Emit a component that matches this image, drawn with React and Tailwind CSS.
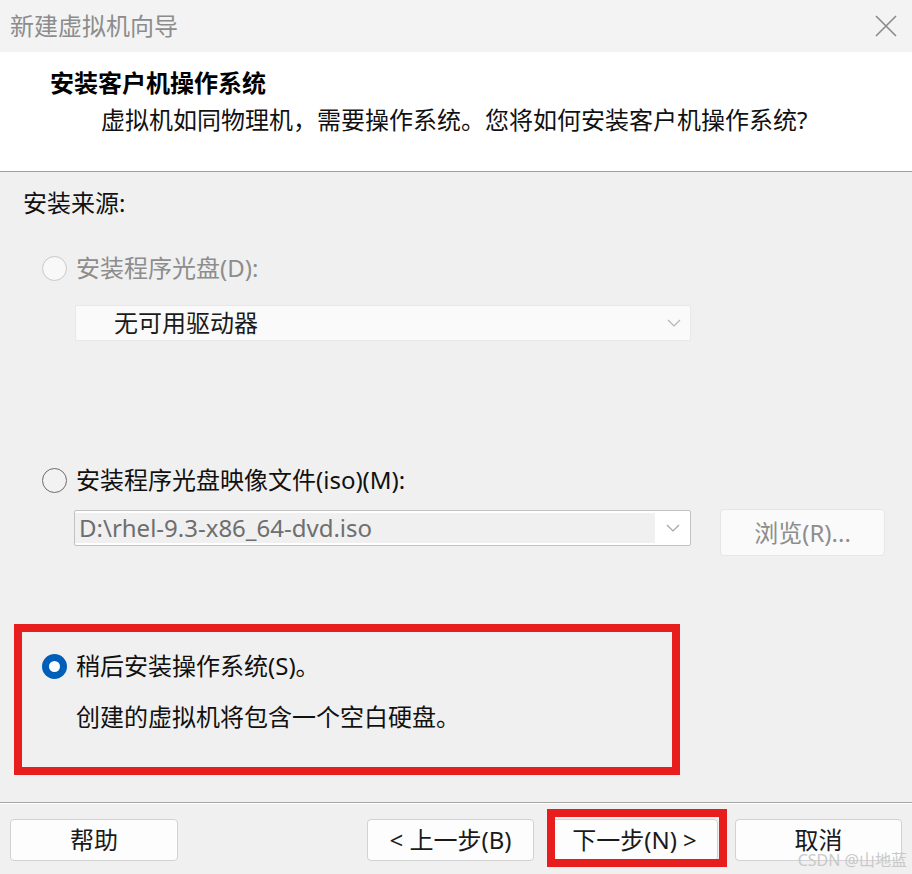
import React from "react";

const FONT = { fontFamily: '"Noto Sans", "Noto Sans CJK SC", sans-serif' };

function Chevron({ color = "#a8a8a8" }) {
  return (
    <svg width="14" height="8" viewBox="0 0 14 8" fill="none">
      <polyline points="1,1 7,7 13,1" stroke={color} strokeWidth="1.2" />
    </svg>
  );
}

function Radio({ kind }) {
  if (kind === "selected") {
    return (
      <div className="w-[25px] h-[25px] rounded-full bg-[#005fb8] flex items-center justify-center shrink-0">
        <div className="w-[11px] h-[11px] rounded-full bg-white" />
      </div>
    );
  }
  if (kind === "disabled") {
    return <div className="w-[25px] h-[25px] rounded-full border-[1.5px] border-[#c8c8c8] bg-[#f8f8f8] shrink-0" />;
  }
  return <div className="w-[25px] h-[25px] rounded-full border-[1.5px] border-[#6c6c6c] bg-[#f2f2f2] shrink-0" />;
}

function Button({ children, w = "w-[167px]" }) {
  return (
    <div className={`${w} h-[42px] rounded-[4px] border border-[#d2d2d2] bg-[#fdfdfd] flex items-center justify-center text-[24px] leading-[24px] text-[#1a1a1a]`}>
      {children}
    </div>
  );
}

export default function App() {
  return (
    <div className="w-[912px] h-[874px] bg-[#f0f0f0] flex flex-col relative overflow-hidden" style={FONT}>
      {/* Title bar */}
      <div className="h-[52px] bg-[#f3f3f3] flex items-center justify-between pl-[10px] pr-[15px] shrink-0">
        <span className="text-[24px] leading-[30px] text-[#8c8c8c]">新建虚拟机向导</span>
        <svg width="22" height="22" viewBox="0 0 22 22" fill="none">
          <path d="M1 1 L21 21 M21 1 L1 21" stroke="#8a8a8a" strokeWidth="1.6" />
        </svg>
      </div>

      {/* Header */}
      <div className="h-[120px] bg-white border-b border-[#a0a0a0] pl-[50px] pt-[16px] shrink-0 flex flex-col">
        <div className="text-[24px] leading-[30px] font-bold text-black">安装客户机操作系统</div>
        <div className="text-[24px] leading-[30px] text-[#111] mt-[7px] pl-[51px]">
          虚拟机如同物理机，需要操作系统。您将如何安装客户机操作系统?
        </div>
      </div>

      {/* Body */}
      <div className="h-[630px] shrink-0 flex flex-col">
        <div className="mt-[16px] pl-[23px] text-[24px] leading-[30px] text-[#111]">安装来源:</div>

        <div className="mt-[35px] pl-[42px] h-[30px] flex items-center gap-[9px]">
          <Radio kind="disabled" />
          <span className="text-[24px] leading-[30px] text-[#8d8d8d]">安装程序光盘(D):</span>
        </div>

        <div className="mt-[22px] ml-[75px] w-[616px] h-[36px] bg-[#fafafa] border border-[#e8e8e8] rounded-[2px] flex items-center justify-between pl-[38px] pr-[9px]">
          <span className="text-[24px] leading-[30px] text-[#1a1a1a]">无可用驱动器</span>
          <Chevron color="#b4b4b4" />
        </div>

        <div className="mt-[124px] pl-[42px] h-[30px] flex items-center gap-[9px]">
          <Radio kind="normal" />
          <span className="text-[24px] leading-[30px] text-[#111]">安装程序光盘映像文件(iso)(M):</span>
        </div>

        <div className="mt-[14px] flex items-start">
          <div className="mt-[1px] ml-[74px] w-[617px] h-[36px] border border-[#c2c2c2] bg-white rounded-[2px] flex items-stretch">
            <div className="w-[580px] mt-[2px] mb-[2px] bg-[#f0f0f0] flex items-center pl-[4px]">
              <span className="text-[24px] leading-[30px] text-[#6e6e6e]">D:\rhel-9.3-x86_64-dvd.iso</span>
            </div>
            <div className="flex-1 flex items-center justify-center">
              <Chevron color="#a4a4a4" />
            </div>
          </div>
          <div className="ml-[29px] w-[165px] h-[47px] rounded-[4px] border border-[#e6e6e6] bg-[#fafafa] flex items-center justify-center">
            <span className="text-[24px] leading-[30px] text-[#8d8d8d]">浏览(R)...</span>
          </div>
        </div>

        <div className="mt-[68px] ml-[14px] w-[666px] h-[151px] border-[8px] border-[#e81d1d] flex flex-col">
          <div className="mt-[19px] pl-[20px] h-[30px] flex items-center gap-[9px]">
            <Radio kind="selected" />
            <span className="text-[24px] leading-[30px] text-[#111]">稍后安装操作系统(S)。</span>
          </div>
          <div className="mt-[21px] pl-[54px] text-[24px] leading-[30px] text-[#111]">
            创建的虚拟机将包含一个空白硬盘。
          </div>
        </div>
      </div>

      {/* Separator */}
      <div className="h-[2px] border-t border-[#a6a6a6] border-b border-b-white shrink-0" />

      {/* Footer */}
      <div className="flex-1 flex items-start pt-[15px] px-[10px]">
        <Button w="w-[168px]">帮助</Button>
        <div className="flex-1" />
        <div className="flex gap-[17px]">
          <Button>&lt; 上一步(B)</Button>
          <Button>下一步(N) &gt;</Button>
          <Button>取消</Button>
        </div>
      </div>

      {/* Annotation box over next button */}
      <div className="absolute left-[547px] top-[809px] w-[180px] h-[58px] border-[8px] border-[#e81d1d]" />

      {/* Watermark */}
      <div className="absolute right-[5px] bottom-[6px] text-[16px] leading-[16px] text-[#c9c9c9]">CSDN @山地蓝</div>
    </div>
  );
}
